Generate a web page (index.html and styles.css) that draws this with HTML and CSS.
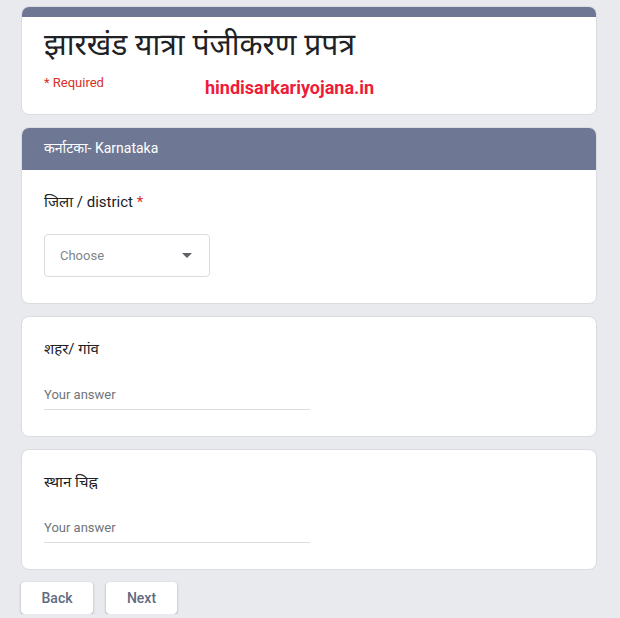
FILE: index.html
```html
<!DOCTYPE html>
<html lang="hi">

<head>
    <meta charset="UTF-8">
    <meta name="viewport" content="width=device-width, initial-scale=1.0">
    <title>झारखंड यात्रा पंजीकरण प्रपत्र</title>
    <link rel="stylesheet" href="styles.css">
</head>

<body>
    <div class="form">
        <div class="card title-card">
            <div class="band"></div>
            <div class="card-body">
                <h1 class="form-title">झारखंड यात्रा पंजीकरण प्रपत्र</h1>
                <div class="required-note">* Required</div>
                <div class="watermark">hindisarkariyojana.in</div>
            </div>
        </div>

        <div class="card">
            <div class="section-head">कर्नाटका- Karnataka</div>
            <div class="card-body question">
                <div class="q-label">जिला / district <span class="star">*</span></div>
                <div class="select">
                    <span>Choose</span>
                    <span class="caret"></span>
                </div>
            </div>
        </div>

        <div class="card">
            <div class="card-body question">
                <div class="q-label">शहर/ गांव</div>
                <div class="answer">Your answer</div>
            </div>
        </div>

        <div class="card">
            <div class="card-body question">
                <div class="q-label">स्थान चिह्न</div>
                <div class="answer">Your answer</div>
            </div>
        </div>

        <div class="nav">
            <button class="nav-btn back">Back</button>
            <button class="nav-btn next">Next</button>
        </div>
    </div>
</body>

</html>
```

FILE: styles.css
```css
body {
    margin: 0;
    background-color: #e9eaee;
    font-family: 'Roboto', 'Noto Sans', sans-serif;
    color: #202124;
}

.form {
    width: 576px;
    margin: 6px 0 0 21px;
    display: flex;
    flex-direction: column;
    gap: 12px;
}

.card {
    background: #fff;
    border: 1px solid #dadce0;
    border-radius: 8px;
    overflow: hidden;
}

.band {
    height: 10px;
    background-color: #6e7894;
}

.card-body {
    padding: 0 22px;
    position: relative;
}

.title-card .card-body {
    padding-top: 8px;
    padding-bottom: 22px;
}

.form-title {
    margin: 0;
    font-family: 'Noto Sans', sans-serif;
    font-size: 30px;
    font-weight: 400;
    line-height: 38px;
    color: #202124;
}

.required-note {
    margin-top: 11px;
    font-size: 13px;
    color: #d93025;
    line-height: 18px;
}

.watermark {
    position: absolute;
    left: 183px;
    top: 60px;
    font-family: 'Roboto', sans-serif;
    font-weight: 700;
    font-size: 18px;
    color: #ee1c3a;
}

.section-head {
    height: 42px;
    line-height: 41px;
    background-color: #6e7894;
    color: #fff;
    font-size: 14px;
    padding: 0 22px;
}

.question {
    padding-top: 22px;
    padding-bottom: 26px;
}

.q-label {
    font-size: 15px;
    line-height: 20px;
    color: #202124;
}

.star {
    color: #d93025;
}

.select {
    margin-top: 22px;
    width: 166px;
    height: 43px;
    box-sizing: border-box;
    border: 1px solid #dadce0;
    border-radius: 4px;
    display: flex;
    align-items: center;
    justify-content: space-between;
    padding: 0 17px 0 15px;
    font-size: 13px;
    color: #80868b;
}

.caret {
    width: 0;
    height: 0;
    border-left: 5px solid transparent;
    border-right: 5px solid transparent;
    border-top: 5px solid #5f6368;
}

.answer {
    margin-top: 27px;
    width: 266px;
    padding-bottom: 5px;
    border-bottom: 1px solid #dadce0;
    font-size: 13px;
    line-height: 18px;
    color: #70757a;
}

.nav {
    display: flex;
    gap: 13px;
}

.nav-btn {
    width: 72px;
    height: 32px;
    background: #fff;
    border: none;
    border-radius: 4px;
    box-shadow: 0 1px 2px rgba(60, 64, 67, 0.3), 0 1px 3px rgba(60, 64, 67, 0.15);
    font-family: 'Roboto', sans-serif;
    font-size: 14px;
    font-weight: 500;
    color: #5f6b80;
    cursor: pointer;
}

.nav-btn.next {
    width: 71px;
}
```
